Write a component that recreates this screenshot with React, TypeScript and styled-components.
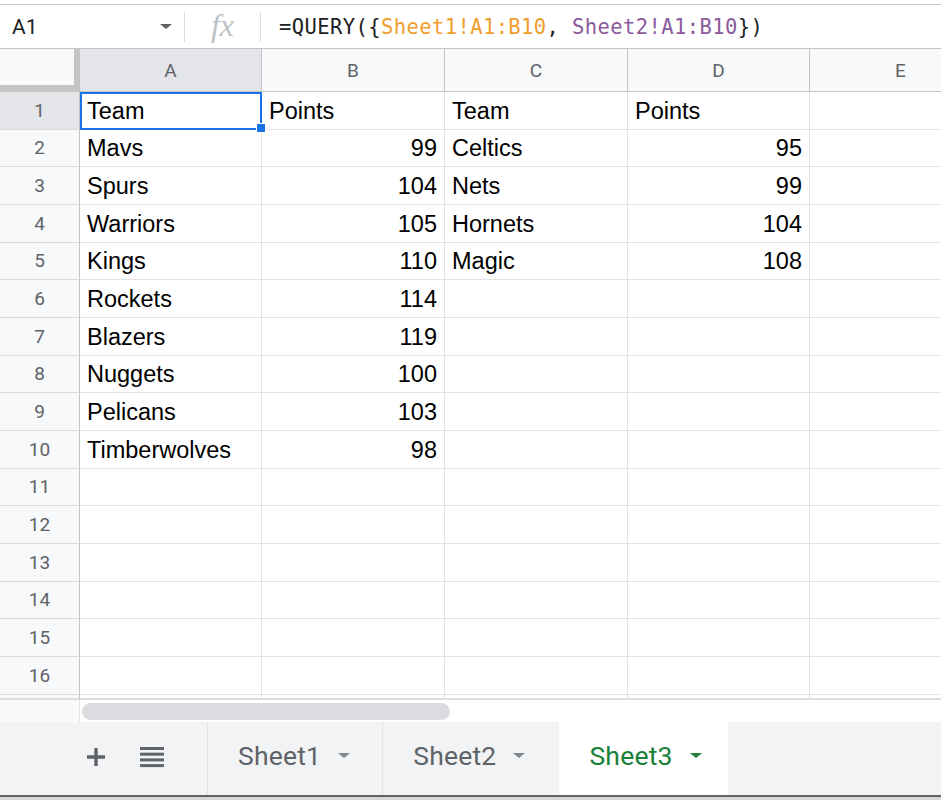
import * as React from "react";
import styled, { createGlobalStyle } from "styled-components";

const GlobalStyle = createGlobalStyle`
  html, body {
    margin: 0;
    padding: 0;
    background: #fff;
  }
  body {
    font-family: Roboto, "Liberation Sans", Arial, sans-serif;
    overflow: hidden;
  }
`;

const Page = styled.div`
  width: 941px;
  height: 800px;
  display: flex;
  flex-direction: column;
  overflow: hidden;
  background: #fff;
`;

const TopStrip = styled.div`
  flex: none;
  height: 4px;
  border-bottom: 1px solid #c7c7c7;
`;

const FormulaBar = styled.div`
  flex: none;
  height: 43px;
  display: flex;
  align-items: center;
  border-bottom: 1px solid #c4c4c4;
`;

const NameBox = styled.div`
  width: 184px;
  box-sizing: border-box;
  padding: 0 12px;
  display: flex;
  align-items: center;
  justify-content: space-between;
  font-size: 21px;
  color: #202124;
`;

const Caret = styled.span<{ $color?: string; $size?: number }>`
  display: inline-block;
  width: 0;
  height: 0;
  border-left: ${(p) => p.$size ?? 6}px solid transparent;
  border-right: ${(p) => p.$size ?? 6}px solid transparent;
  border-top: ${(p) => (p.$size ?? 6) - 1}px solid ${(p) => p.$color ?? "#5f6368"};
`;

const Divider = styled.div`
  width: 1px;
  height: 30px;
  background: #dadce0;
`;

const FxBox = styled.div`
  width: 75px;
  text-align: center;
  font-family: "Liberation Serif", "DejaVu Serif", serif;
  font-style: italic;
  font-size: 32px;
  color: #bdc1c6;
  line-height: 1;
  margin-top: -4px;
`;

const Formula = styled.div`
  padding-left: 18px;
  font-family: "DejaVu Sans Mono", "Liberation Mono", monospace;
  font-size: 20.5px;
  color: #202124;
  white-space: pre;
  letter-spacing: 0.4px;
`;

const Ref = styled.span<{ $color: string }>`
  color: ${(p) => p.$color};
`;

const Grid = styled.div`
  flex: none;
  display: grid;
  grid-template-columns: 80px 182px 183px 183px 182px 182px;
  grid-template-rows: 43px repeat(16, 37.67px) 5px;
`;

const Corner = styled.div`
  box-sizing: border-box;
  background: #f8f9fa;
  border-right: 6px solid #c4c4c4;
  border-bottom: 7px solid #c4c4c4;
`;

const ColHeader = styled.div<{ $active?: boolean }>`
  box-sizing: border-box;
  background: ${(p) => (p.$active ? "#e3e5e8" : "#f8f9fa")};
  border-right: 1px solid #c4c4c4;
  border-bottom: 1px solid #c4c4c4;
  display: flex;
  align-items: center;
  justify-content: center;
  font-size: 19px;
  color: #5f6368;
`;

const RowHeader = styled.div<{ $active?: boolean }>`
  box-sizing: border-box;
  background: ${(p) => (p.$active ? "#e3e5e8" : "#f8f9fa")};
  border-right: 1px solid #c4c4c4;
  border-bottom: 1px solid #dadada;
  display: flex;
  align-items: center;
  justify-content: center;
  font-size: 19px;
  color: #5f6368;
`;

const Cell = styled.div<{ $num?: boolean; $selected?: boolean }>`
  position: relative;
  box-sizing: border-box;
  border-right: 1px solid #e2e2e2;
  border-bottom: 1px solid #e2e2e2;
  display: flex;
  align-items: center;
  justify-content: ${(p) => (p.$num ? "flex-end" : "flex-start")};
  padding: 2px 7px 0;
  font-family: "Liberation Sans", Arial, sans-serif;
  font-size: 23.5px;
  color: #000;
  white-space: nowrap;
  ${(p) =>
    p.$selected &&
    `
    z-index: 1;
    outline: 2px solid #1a73e8;
    outline-offset: -2px;
  `}
`;

const FillHandle = styled.span`
  position: absolute;
  right: -5px;
  bottom: -4px;
  width: 8px;
  height: 8px;
  background: #1a73e8;
  border: 1px solid #fff;
`;

const SliverCell = styled.div<{ $head?: boolean }>`
  box-sizing: border-box;
  background: ${(p) => (p.$head ? "#f8f9fa" : "#fff")};
  border-right: 1px solid ${(p) => (p.$head ? "#c4c4c4" : "#e2e2e2")};
  border-bottom: 2px solid #dcdcdc;
`;

const ScrollRow = styled.div`
  flex: none;
  height: 22px;
  display: grid;
  grid-template-columns: 80px 1fr;
`;

const ScrollGutter = styled.div`
  background: #f8f9fa;
  border-right: 1px solid #e2e2e2;
`;

const ScrollTrack = styled.div`
  padding: 3px 0 0 2px;
`;

const ScrollThumb = styled.div`
  width: 368px;
  height: 17px;
  border-radius: 9px;
  background: #dadce0;
`;

const TabBar = styled.div`
  flex: none;
  height: 73px;
  display: flex;
  background: #f1f3f4;
`;

const Tools = styled.div`
  width: 207px;
  box-sizing: border-box;
  padding: 0 0 2px 86px;
  display: flex;
  align-items: center;
  gap: 34px;
`;

const Tab = styled.div<{ $active?: boolean }>`
  display: flex;
  align-items: center;
  gap: 17px;
  padding: 0 ${(p) => (p.$active ? "26px" : "32px")} 5px 30px;
  margin-left: ${(p) => (p.$active ? "2px" : "0")};
  border-left: ${(p) => (p.$active ? "none" : "1px solid #e0e2e5")};
  background: ${(p) => (p.$active ? "#fff" : "transparent")};
  color: ${(p) => (p.$active ? "#188038" : "#5f6368")};
  font-family: Roboto, "Liberation Sans", Arial, sans-serif;
  font-weight: 400;
  font-size: 26.5px;
  letter-spacing: 0.2px;
`;

const BottomEdge = styled.div`
  flex: none;
  height: 2px;
  background: #5f6368;
`;

const BottomFill = styled.div`
  flex: 1;
  background: #d6d6d6;
`;

const PlusIcon = () => (
  <svg width="20" height="20" viewBox="0 0 20 20">
    <path d="M10 1v18M1 10h18" stroke="#5f6368" strokeWidth="3.4" />
  </svg>
);

const MenuIcon = () => (
  <svg width="24" height="21" viewBox="0 0 24 21">
    {[1.5, 7.2, 12.9, 18.6].map((y) => (
      <rect key={y} x="0" y={y - 1.5} width="24" height="3" fill="#5f6368" />
    ))}
  </svg>
);

type Row = [string, string, string, string];

const rows: Row[] = [
  ["Team", "Points", "Team", "Points"],
  ["Mavs", "99", "Celtics", "95"],
  ["Spurs", "104", "Nets", "99"],
  ["Warriors", "105", "Hornets", "104"],
  ["Kings", "110", "Magic", "108"],
  ["Rockets", "114", "", ""],
  ["Blazers", "119", "", ""],
  ["Nuggets", "100", "", ""],
  ["Pelicans", "103", "", ""],
  ["Timberwolves", "98", "", ""],
];

const columns = ["A", "B", "C", "D", "E"];
const isNum = (v: string) => /^\d+$/.test(v);

export default function App() {
  const body: React.ReactNode[] = [];
  for (let r = 0; r < 16; r++) {
    const data = rows[r] ?? ["", "", "", ""];
    body.push(
      <RowHeader key={`h${r}`} $active={r === 0}>
        {r + 1}
      </RowHeader>
    );
    [...data, ""].forEach((v, c) => {
      const selected = r === 0 && c === 0;
      body.push(
        <Cell key={`${r}-${c}`} $num={isNum(v)} $selected={selected}>
          {v}
          {selected && <FillHandle />}
        </Cell>
      );
    });
  }

  return (
    <Page>
      <GlobalStyle />
      <TopStrip />
      <FormulaBar>
        <NameBox>
          A1
          <Caret />
        </NameBox>
        <Divider />
        <FxBox>fx</FxBox>
        <Divider />
        <Formula>
          =QUERY({"{"}
          <Ref $color="#f09d2e">Sheet1!A1:B10</Ref>,{" "}
          <Ref $color="#8a5a9c">Sheet2!A1:B10</Ref>
          {"})"}
        </Formula>
      </FormulaBar>
      <Grid>
        <Corner />
        {columns.map((c) => (
          <ColHeader key={c} $active={c === "A"}>
            {c}
          </ColHeader>
        ))}
        {body}
        <SliverCell $head />
        {columns.map((c) => (
          <SliverCell key={`s${c}`} />
        ))}
      </Grid>
      <ScrollRow>
        <ScrollGutter />
        <ScrollTrack>
          <ScrollThumb />
        </ScrollTrack>
      </ScrollRow>
      <TabBar>
        <Tools>
          <PlusIcon />
          <MenuIcon />
        </Tools>
        <Tab>
          Sheet1
          <Caret $color="#80868b" />
        </Tab>
        <Tab>
          Sheet2
          <Caret $color="#80868b" />
        </Tab>
        <Tab $active>
          Sheet3
          <Caret $color="#188038" />
        </Tab>
      </TabBar>
      <BottomEdge />
      <BottomFill />
    </Page>
  );
}
